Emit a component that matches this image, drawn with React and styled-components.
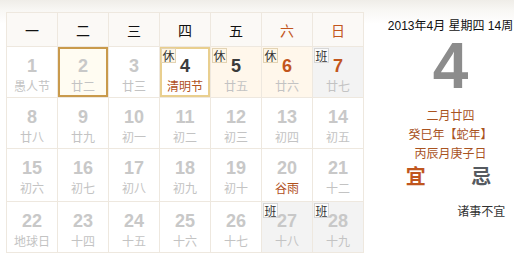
import React from 'react';
import styled, { createGlobalStyle } from 'styled-components';

const GlobalStyle = createGlobalStyle`
  html, body {
    margin: 0;
    padding: 0;
  }
  body {
    background: linear-gradient(#efede8 0, #f8f7f4 10px, #fff 24px);
    font-family: "Liberation Sans", Arial, "Noto Sans CJK SC", sans-serif;
    font-size: 12px;
    color: #222;
  }
`;

const WEEKDAYS = ['一', '二', '三', '四', '五', '六', '日'];

const DAYS = [
  { d: 1, lunar: '愚人节' },
  { d: 2, lunar: '廿二', kind: 'selected' },
  { d: 3, lunar: '廿三' },
  { d: 4, lunar: '清明节', kind: 'today', badge: '休', tone: 'dark', festival: true },
  { d: 5, lunar: '廿五', kind: 'rest', badge: '休', tone: 'dark' },
  { d: 6, lunar: '廿六', kind: 'rest', badge: '休', tone: 'red' },
  { d: 7, lunar: '廿七', kind: 'work', badge: '班', tone: 'red' },
  { d: 8, lunar: '廿八' },
  { d: 9, lunar: '廿九' },
  { d: 10, lunar: '初一' },
  { d: 11, lunar: '初二' },
  { d: 12, lunar: '初三' },
  { d: 13, lunar: '初四' },
  { d: 14, lunar: '初五' },
  { d: 15, lunar: '初六' },
  { d: 16, lunar: '初七' },
  { d: 17, lunar: '初八' },
  { d: 18, lunar: '初九' },
  { d: 19, lunar: '初十' },
  { d: 20, lunar: '谷雨', festival: true },
  { d: 21, lunar: '十二' },
  { d: 22, lunar: '地球日' },
  { d: 23, lunar: '十四' },
  { d: 24, lunar: '十五' },
  { d: 25, lunar: '十六' },
  { d: 26, lunar: '十七' },
  { d: 27, lunar: '十八', kind: 'work', badge: '班' },
  { d: 28, lunar: '十九', kind: 'work', badge: '班' },
];

const CELL_BG = {
  selected: '#fffcf2',
  today: '#ffffff',
  rest: '#fff7eb',
  work: '#f3f3f3',
};

const CELL_FRAME = {
  selected: 'inset 0 0 0 2px #c99a4c',
  today: 'inset 0 0 0 2px #e9cf8f',
};

const NUM_COLOR = {
  dark: '#3b3b3b',
  red: '#c2561d',
};

const App = () => (
  <>
    <GlobalStyle />
    <Page>
      <Calendar>
        {WEEKDAYS.map((w, i) => (
          <HeadCell key={w} $weekend={i > 4}>{w}</HeadCell>
        ))}
        {DAYS.map((day) => (
          <DayCell key={day.d} $kind={day.kind}>
            {day.badge && <Badge $work={day.badge === '班'}>{day.badge}</Badge>}
            <DayNum $tone={day.tone}>{day.d}</DayNum>
            <Lunar $festival={day.festival}>{day.lunar}</Lunar>
          </DayCell>
        ))}
      </Calendar>
      <Detail>
        <DateLine>2013年4月 星期四 14周</DateLine>
        <BigDay>4</BigDay>
        <LunarInfo>
          <div>二月廿四</div>
          <div>癸巳年【蛇年】</div>
          <div>丙辰月庚子日</div>
        </LunarInfo>
        <Advice>
          <AdviceCol>
            <AdviceHead $good>宜</AdviceHead>
          </AdviceCol>
          <AdviceCol>
            <AdviceHead>忌</AdviceHead>
            <AdviceText>诸事不宜</AdviceText>
          </AdviceCol>
        </Advice>
      </Detail>
    </Page>
  </>
);

const Page = styled.div`
  display: flex;
  align-items: flex-start;
  width: 514px;
  height: 255px;
  padding: 12px 0 0 6px;
  box-sizing: border-box;
  overflow: hidden;
`;

const Calendar = styled.div`
  display: grid;
  grid-template-columns: repeat(7, 50px);
  grid-template-rows: 33px 50px 50px 52px 50px;
  gap: 1px;
  padding: 1px;
  background: #eee8df;
  flex-shrink: 0;
`;

const HeadCell = styled.div`
  display: flex;
  align-items: center;
  justify-content: center;
  background: #fbf9f6;
  font-family: "Noto Sans CJK SC", sans-serif;
  font-size: 14px;
  color: ${(p) => (p.$weekend ? '#c2561d' : '#111')};
`;

const DayCell = styled.div`
  position: relative;
  display: flex;
  flex-direction: column;
  align-items: center;
  padding-top: 9px;
  box-sizing: border-box;
  background: ${(p) => CELL_BG[p.$kind] || '#fff'};
  box-shadow: ${(p) => CELL_FRAME[p.$kind] || 'none'};
`;

const Badge = styled.span`
  position: absolute;
  top: 1px;
  left: 1px;
  width: 15px;
  height: 15px;
  line-height: 14px;
  text-align: center;
  font-family: "Noto Sans CJK SC", sans-serif;
  font-size: 12px;
  color: #333;
  background: ${(p) => (p.$work ? '#fcfcfc' : '#fdf6e7')};
  border: 1px solid ${(p) => (p.$work ? '#d6d6d6' : '#e3d3b3')};
  box-sizing: border-box;
`;

const DayNum = styled.div`
  font-family: "Liberation Sans", Arial, sans-serif;
  font-size: 18px;
  font-weight: 700;
  line-height: 20px;
  color: ${(p) => NUM_COLOR[p.$tone] || '#c8c8c8'};
`;

const Lunar = styled.div`
  margin-top: 2px;
  font-family: "Noto Sans CJK SC", sans-serif;
  font-size: 12px;
  line-height: 16px;
  color: ${(p) => (p.$festival ? '#b0501c' : '#c3c3c3')};
`;

const Detail = styled.div`
  width: 127px;
  margin-left: 23px;
  padding-top: 6px;
  display: flex;
  flex-direction: column;
  align-items: center;
  text-align: center;
`;

const DateLine = styled.div`
  white-space: nowrap;
  font-size: 12px;
  line-height: 16px;
  color: #111;
`;

const BigDay = styled.div`
  font-family: "Liberation Sans", Arial, sans-serif;
  font-size: 64px;
  font-weight: 700;
  line-height: 64px;
  color: #8c8c8c;
`;

const LunarInfo = styled.div`
  margin-top: 7px;
  font-family: "Noto Sans CJK SC", sans-serif;
  font-size: 12px;
  line-height: 19px;
  color: #a9531f;
  white-space: nowrap;
`;

const Advice = styled.div`
  align-self: stretch;
  display: grid;
  grid-template-columns: 1fr 1fr;
  margin: 2px 0 0 -4px;
`;

const AdviceCol = styled.div`
  display: flex;
  flex-direction: column;
  align-items: center;
`;

const AdviceHead = styled.div`
  font-family: "Noto Sans CJK SC", sans-serif;
  font-size: 20px;
  line-height: 24px;
  font-weight: 700;
  color: ${(p) => (p.$good ? '#c0561e' : '#555a60')};
`;

const AdviceText = styled.div`
  margin-top: 15px;
  font-family: "Noto Sans CJK SC", sans-serif;
  font-size: 12px;
  line-height: 16px;
  color: #333;
  white-space: nowrap;
`;

export default App;
